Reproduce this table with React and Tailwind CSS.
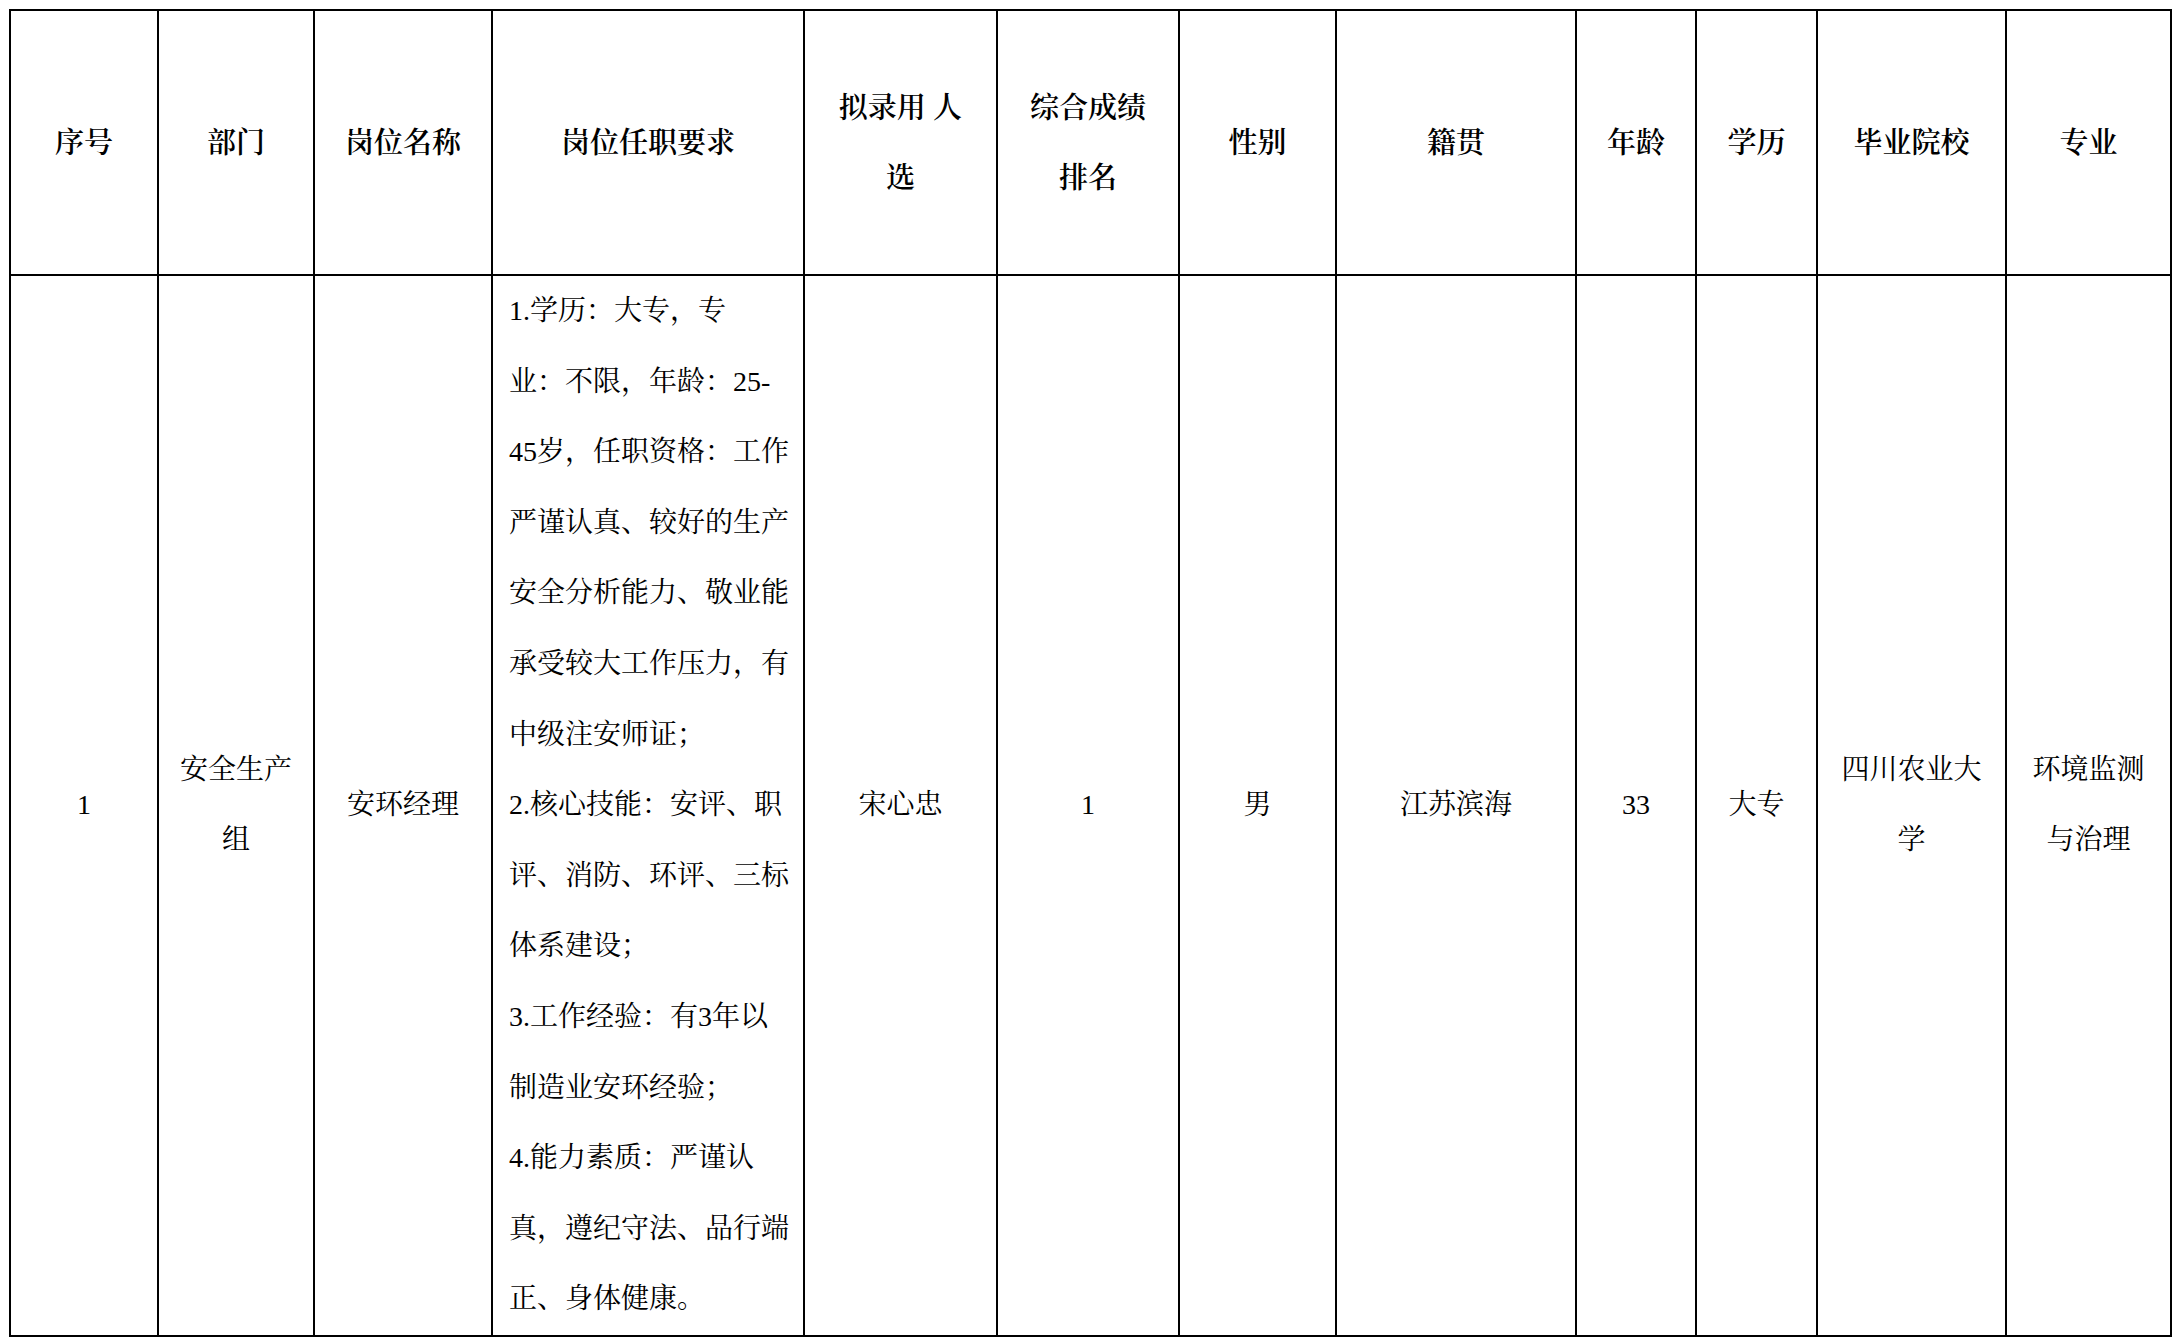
import React from "react";

const font = {
  fontFamily:
    '"Liberation Serif", "Noto Serif CJK SC", "Noto Sans CJK SC", serif',
};

const cols = [148, 156, 178, 312, 193, 182, 157, 240, 120, 121, 189, 165];

const heads = [
  ["序号"],
  ["部门"],
  ["岗位名称"],
  ["岗位任职要求"],
  ["拟录用 人", "选"],
  ["综合成绩", "排名"],
  ["性别"],
  ["籍贯"],
  ["年龄"],
  ["学历"],
  ["毕业院校"],
  ["专业"],
];

const reqLines = [
  "1.学历：大专，专",
  "业：不限，年龄：25-",
  "45岁，任职资格：工作",
  "严谨认真、较好的生产",
  "安全分析能力、敬业能",
  "承受较大工作压力，有",
  "中级注安师证；",
  "2.核心技能：安评、职",
  "评、消防、环评、三标",
  "体系建设；",
  "3.工作经验：有3年以",
  "制造业安环经验；",
  "4.能力素质：严谨认",
  "真，遵纪守法、品行端",
  "正、身体健康。",
];

function Lines({ lines }) {
  return lines.map((l, i) => (
    <span key={i} className="block whitespace-nowrap">
      {l}
    </span>
  ));
}

export default function App() {
  return (
    <div className="min-h-screen bg-white text-black" style={font}>
      <div className="pl-[9px] pt-[9px]">
        <table className="table-fixed border-collapse w-[2161px]">
          <colgroup>
            {cols.map((w, i) => (
              <col key={i} style={{ width: w }} />
            ))}
          </colgroup>
          <thead>
            <tr className="h-[265px]">
              {heads.map((h, i) => (
                <th
                  key={i}
                  className="border-2 border-black text-center align-middle text-[29px] leading-[70px] font-semibold p-0"
                >
                  <Lines lines={h} />
                </th>
              ))}
            </tr>
          </thead>
          <tbody className="text-[28px] leading-[70.6px] font-normal">
            <tr className="h-[1060px]">
              <td className="border-2 border-black text-center align-middle">
                1
              </td>
              <td className="border-2 border-black text-center align-middle">
                <Lines lines={["安全生产", "组"]} />
              </td>
              <td className="border-2 border-black text-center align-middle">
                安环经理
              </td>
              <td className="border-2 border-black align-middle pl-[16px] pr-0 py-0 text-left">
                <Lines lines={reqLines} />
              </td>
              <td className="border-2 border-black text-center align-middle">
                宋心忠
              </td>
              <td className="border-2 border-black text-center align-middle">
                1
              </td>
              <td className="border-2 border-black text-center align-middle">
                男
              </td>
              <td className="border-2 border-black text-center align-middle">
                江苏滨海
              </td>
              <td className="border-2 border-black text-center align-middle">
                33
              </td>
              <td className="border-2 border-black text-center align-middle">
                大专
              </td>
              <td className="border-2 border-black text-center align-middle">
                <Lines lines={["四川农业大", "学"]} />
              </td>
              <td className="border-2 border-black text-center align-middle">
                <Lines lines={["环境监测", "与治理"]} />
              </td>
            </tr>
          </tbody>
        </table>
      </div>
    </div>
  );
}
